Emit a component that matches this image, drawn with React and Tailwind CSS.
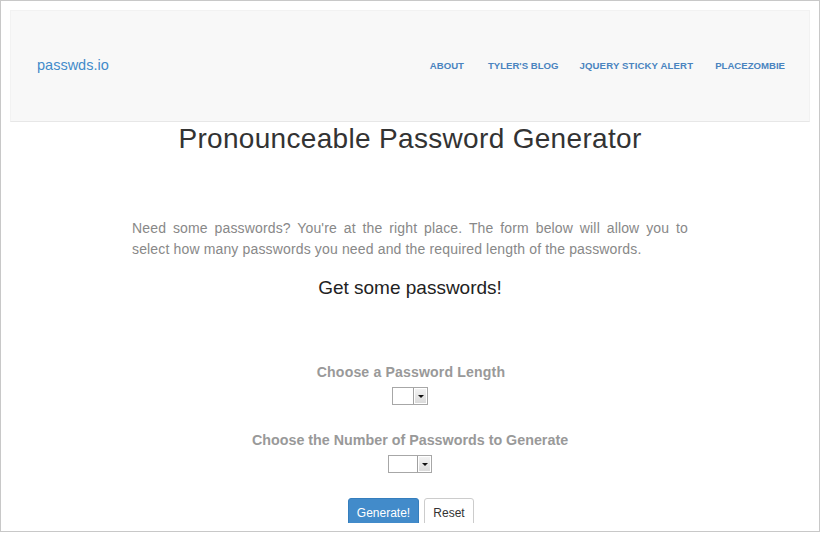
import React from "react";

function FakeSelect({ width }) {
  return (
    <div className={`mx-auto flex h-[18px] ${width} border border-[#a7a7a7] bg-white`}>
      <div className="flex-1" />
      <div className="flex w-[14px] items-center justify-center border-l border-[#a0a0a0] bg-gradient-to-b from-[#f4f4f4] to-[#d9d9d9] shadow-[inset_0_0_0_1px_#ffffff]">
        <div className="h-0 w-0 border-x-[3px] border-t-[3px] border-x-transparent border-t-[#111]" />
      </div>
    </div>
  );
}

export default function App() {
  return (
    <div className="h-[532px] w-[820px] border border-[#c8c8c8] bg-white px-[9px] pt-[9px] pb-[8px] font-['Liberation_Sans',Arial,sans-serif]">
      <div className="flex h-[513px] flex-col overflow-hidden">
        <nav className="flex h-[112px] shrink-0 items-center justify-between border border-[#f2f2f2] border-b-[#e7e7e7] bg-[#f8f8f8]">
          <a className="pl-[26px] text-[14.5px] text-[#428bca]">passwds.io</a>
          <div className="flex pr-[24px] text-[9.6px] font-bold uppercase text-[#4a84bf]">
            <a>About</a>
            <a className="ml-[24px]">Tyler's Blog</a>
            <a className="ml-[21px] tracking-[0.15px]">jQuery Sticky Alert</a>
            <a className="ml-[22px]">PlaceZombie</a>
          </div>
        </nav>

        <h1 className="mt-[1px] text-center text-[28px] leading-[31px] tracking-[0.32px] text-[#333]">
          Pronounceable Password Generator
        </h1>

        <p className="mx-auto mt-[64px] w-[556px] text-justify text-[14px] leading-[21px] tracking-[0.15px] text-[#888]">
          Need some passwords? You're at the right place. The form below will allow you to select how many passwords you need and the required length of the passwords.
        </p>

        <h3 className="mt-[17px] text-center text-[19px] leading-[21px] text-[#222]">
          Get some passwords!
        </h3>

        <div className="mt-[64px] pl-[2px] text-center text-[14.1px] font-bold leading-[20px] tracking-[0.15px] text-[#999]">
          Choose a Password Length
        </div>
        <div className="mt-[5px]">
          <FakeSelect width="w-[36px]" />
        </div>

        <div className="mt-[25px] text-center text-[14.3px] font-bold leading-[20px] text-[#999]">
          Choose the Number of Passwords to Generate
        </div>
        <div className="mt-[5px]">
          <FakeSelect width="w-[44px]" />
        </div>

        <div className="mt-[25px] flex justify-center gap-[5px] pl-[2px]">
          <button className="h-[30px] w-[71px] shrink-0 rounded-[3px] border border-[#357ebd] bg-[#428bca] text-[12px] text-white">
            Generate!
          </button>
          <button className="h-[30px] w-[50px] shrink-0 rounded-[3px] border border-[#cccccc] bg-white text-[12px] text-[#333]">
            Reset
          </button>
        </div>
      </div>
    </div>
  );
}
